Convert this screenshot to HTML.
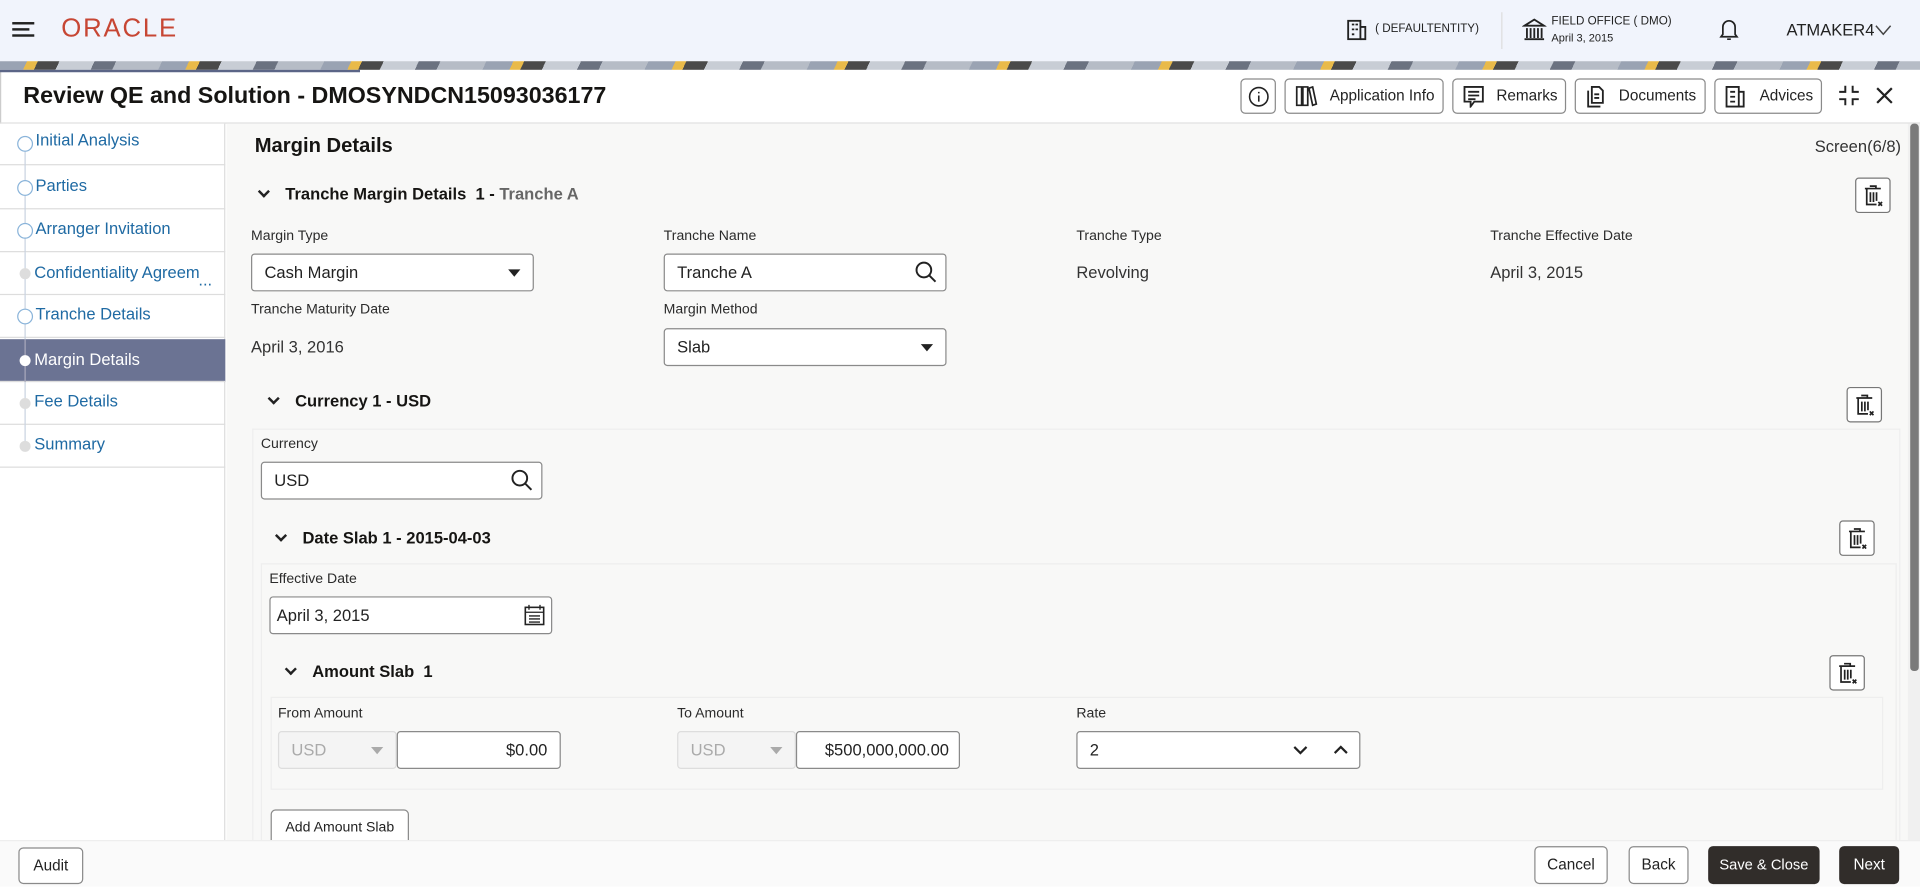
<!DOCTYPE html>
<html><head><meta charset="utf-8">
<style>
*{box-sizing:border-box;margin:0;padding:0}
html,body{width:1920px;height:886px;overflow:hidden;background:#fff}
#w{position:absolute;left:0;top:0;width:1568px;height:724px;transform:scale(1.22449);transform-origin:0 0;font-family:"Liberation Sans",sans-serif;color:#161513;overflow:hidden}
.a{position:absolute}
.t{position:absolute;white-space:nowrap}
.lbl{font-size:11.5px;color:#2b2b2b}
.val{font-size:13.5px;color:#333}
.inp{position:absolute;background:#fff;border:1px solid #8a8a8a;border-radius:3px;height:31px;font-size:13.5px;padding:0 10px;line-height:29px;color:#222}
.btn{position:absolute;border:1px solid #8a8a8a;border-radius:4px;background:#fff;height:29px;font-size:12.5px;line-height:27px;text-align:center;color:#222}
.side{position:absolute;left:0;width:184px;height:35px;border-bottom:1px solid #ddd;font-size:13.5px;color:#1f6aa3}
.side span{position:absolute;left:29px;top:8px;white-space:nowrap}
.chk{position:absolute;left:14px;top:11px;width:13px;height:13px;border:1px solid #8ab4da;border-radius:50%;background:#fff}
.dot{position:absolute;left:16px;top:13px;width:9px;height:9px;border-radius:50%;background:#ddd}
.vl{position:absolute;left:20px;width:1px;background:#c9d3e0}
.trash{position:absolute;width:29px;height:29px;border:1px solid #777;border-radius:3px;background:#fff}
.sec{position:absolute;font-size:13.5px;font-weight:bold;color:#161513;white-space:nowrap}
.chev{display:inline-block;width:7px;height:7px;border-right:2px solid #222;border-bottom:2px solid #222;transform:rotate(45deg);margin-right:14px;position:relative;top:-3px}
</style></head><body><div id="w">
<div class="a" style="left:0;top:0;width:1568px;height:50px;background:#f1f4fc"></div>
<div class="a" style="left:10px;top:18px;width:18px;height:2px;background:#222"></div>
<div class="a" style="left:10px;top:23px;width:14px;height:2px;background:#222"></div>
<div class="a" style="left:10px;top:28px;width:18px;height:2px;background:#222"></div>
<div class="t" style="left:50px;top:12px;font-size:21px;color:#c74634;letter-spacing:1.5px">ORACLE</div>
<svg class="a" style="left:1099px;top:15px" width="18" height="18" viewBox="0 0 18 18" fill="none" stroke="#222" stroke-width="1.5"><rect x="2" y="2" width="10" height="15"/><path d="M12 7h4v10h-4M5 5h2M5 9h2M5 13h2M8 5h2M8 9h2"/></svg>
<div class="t" style="left:1123px;top:18px;font-size:9.5px;color:#222">( DEFAULTENTITY)</div>
<div class="a" style="left:1226px;top:10px;width:1px;height:30px;background:#ddd"></div>
<svg class="a" style="left:1243px;top:14px" width="20" height="20" viewBox="0 0 20 20" fill="none" stroke="#222" stroke-width="1.5"><path d="M2 7L10 2 18 7zM4 9v8M7 9v8M10 9v8M13 9v8M16 9v8M2 18h16"/></svg>
<div class="t" style="left:1267px;top:12px;font-size:9.5px;color:#222">FIELD OFFICE ( DMO)</div>
<div class="t" style="left:1267px;top:26px;font-size:9px;color:#222">April 3, 2015</div>
<svg class="a" style="left:1404px;top:14px" width="16" height="20" viewBox="0 0 16 20" fill="none" stroke="#222" stroke-width="1.4"><path d="M3 14V8a5 5 0 0110 0v6l1.5 2h-13z M6.5 18h3"/></svg>
<div class="t" style="left:1459px;top:17px;font-size:13.5px;color:#222">ATMAKER4</div>
<svg class="a" style="left:1531px;top:20px" width="14" height="10" viewBox="0 0 14 10" fill="none" stroke="#444" stroke-width="1.2"><path d="M1 1l6 7 6-7"/></svg>
<div class="a" style="left:0;top:50px;width:1568px;height:8px;background:repeating-linear-gradient(115deg,#9aa3b3 0 20px,#e9ba4a 20px 28px,#4a4a4a 28px 44px,#c8cdd5 44px 70px,#6b7280 70px 86px,#b6bcc6 86px 120px)"></div>
<div class="a" style="left:0;top:57px;width:1568px;height:667px;background:#fff;border-left:1px solid #ccc"></div>
<div class="a" style="left:0;top:57px;width:294px;height:2px;background:#5b6587"></div>
<div class="t" style="left:19px;top:68px;font-size:19px;font-weight:bold;color:#161513">Review QE and Solution - DMOSYNDCN15093036177</div>
<div class="btn" style="left:1013px;top:64px;width:29px;"><svg width="18" height="18" viewBox="0 0 18 18" style="margin-top:5px" fill="none" stroke="#222" stroke-width="1.3"><circle cx="9" cy="9" r="7.5"/><path d="M9 8v5M9 5v1.3"/></svg></div>
<div class="btn" style="left:1049px;top:64px;width:130px;text-align:left;padding-left:36px">Application Info</div>
<svg class="a" style="left:1058px;top:70px" width="18" height="17" viewBox="0 0 18 17" fill="none" stroke="#222" stroke-width="1.4"><path d="M1 1h4v15H1zM6 1h4v15H6zM11 2l3-1 3 14-3 1z"/></svg>
<div class="btn" style="left:1186px;top:64px;width:93px;text-align:left;padding-left:35px">Remarks</div>
<svg class="a" style="left:1195px;top:70px" width="17" height="18" viewBox="0 0 17 18" fill="none" stroke="#222" stroke-width="1.5"><path d="M1 1h15v12H9l-3 4v-4H1zM4 5h9M4 8h9M4 11h6"/></svg>
<div class="btn" style="left:1286px;top:64px;width:107px;text-align:left;padding-left:35px">Documents</div>
<svg class="a" style="left:1296px;top:70px" width="16" height="18" viewBox="0 0 16 18" fill="none" stroke="#222" stroke-width="1.5"><path d="M4 1h6l3 3v10H4zM1 4v13h10M6 7h4M6 10h4"/></svg>
<div class="btn" style="left:1400px;top:64px;width:88px;text-align:left;padding-left:36px">Advices</div>
<svg class="a" style="left:1409px;top:70px" width="17" height="18" viewBox="0 0 17 18" fill="none" stroke="#222" stroke-width="1.5"><path d="M1 1h10v16H1zM11 5h4v12h-4M4 5h4M4 9h4M4 13h4"/></svg>
<svg class="a" style="left:1501px;top:69px" width="18" height="18" viewBox="0 0 18 18" fill="none" stroke="#222" stroke-width="1.6"><path d="M6 1v5H1M12 1v5h5M6 17v-5H1M12 17v-5h5"/></svg>
<svg class="a" style="left:1532px;top:71px" width="14" height="14" viewBox="0 0 14 14" stroke="#222" stroke-width="1.8"><path d="M1 1l12 12M13 1L1 13"/></svg>
<div class="a" style="left:0;top:100px;width:1568px;height:1px;background:#ddd"></div>
<div class="a" style="left:0;top:101px;width:184px;height:585px;background:#fff;border-right:1px solid #ddd"></div>
<div class="side" style="top:100px"><div class="vl" style="top:24px;height:12px"></div><div class="chk"></div><span style="top:7px">Initial Analysis</span></div>
<div class="side" style="top:136px"><div class="vl" style="top:0;height:35px"></div><div class="chk"></div><span>Parties</span></div>
<div class="side" style="top:171px"><div class="vl" style="top:0;height:35px"></div><div class="chk"></div><span>Arranger Invitation</span></div>
<div class="side" style="top:206px"><div class="vl" style="top:0;height:35px"></div><div class="dot"></div><span style="left:28px;top:9px">Confidentiality Agreem</span><span style="left:162px;top:15px;color:#1f6aa3">...</span></div>
<div class="side" style="top:241px"><div class="vl" style="top:0;height:36px"></div><div class="chk"></div><span>Tranche Details</span></div>
<div class="side" style="top:277px;background:#6b7393;color:#fff"><div class="vl" style="top:0;height:35px;background:#aab"></div><div class="dot" style="background:#fff"></div><span style="left:28px;top:9px">Margin Details</span></div>
<div class="side" style="top:312px"><div class="vl" style="top:0;height:35px"></div><div class="dot"></div><span style="left:28px">Fee Details</span></div>
<div class="side" style="top:347px"><div class="vl" style="top:0;height:18px"></div><div class="dot"></div><span style="left:28px">Summary</span></div>
<div class="a" style="left:188px;top:380px;width:3px;height:75px;border:1px solid #ccc;border-radius:2px"></div>
<div class="a" style="left:185px;top:101px;width:1373px;height:585px;background:#f8f8f7"></div>
<div class="a" style="left:1558px;top:101px;width:10px;height:585px;background:#f0f0f0"></div>
<div class="a" style="left:1560px;top:101px;width:7px;height:447px;background:#7a7a7a;border-radius:3px"></div>
<div class="t" style="left:208px;top:110px;font-size:16.5px;font-weight:bold">Margin Details</div>
<div class="t" style="left:1482px;top:112px;font-size:13.5px;color:#333">Screen(6/8)</div>
<div class="sec" style="left:212px;top:151px"><span class="chev"></span>Tranche Margin Details&nbsp;&nbsp;1 - <span style="color:#666">Tranche A</span></div>
<div class="trash" style="left:1515px;top:145px"></div>
<div class="t lbl" style="left:205px;top:187px">Margin Type</div>
<div class="inp" style="left:205px;top:207px;width:231px">Cash Margin<span style="position:absolute;right:10px;top:12px;border:5px solid transparent;border-top:6px solid #222;border-bottom:0"></span></div>
<div class="t lbl" style="left:542px;top:187px">Tranche Name</div>
<div class="inp" style="left:542px;top:207px;width:231px">Tranche A</div>
<div class="t lbl" style="left:879px;top:187px">Tranche Type</div>
<div class="t val" style="left:879px;top:215px">Revolving</div>
<div class="t lbl" style="left:1217px;top:187px">Tranche Effective Date</div>
<div class="t val" style="left:1217px;top:215px">April 3, 2015</div>
<div class="t lbl" style="left:205px;top:247px">Tranche Maturity Date</div>
<div class="t val" style="left:205px;top:276px">April 3, 2016</div>
<div class="t lbl" style="left:542px;top:247px">Margin Method</div>
<div class="inp" style="left:542px;top:268px;width:231px">Slab<span style="position:absolute;right:10px;top:12px;border:5px solid transparent;border-top:6px solid #222;border-bottom:0"></span></div>
<div class="sec" style="left:220px;top:320px"><span class="chev"></span>Currency 1 - USD</div>
<div class="trash" style="left:1508px;top:316px"></div>
<div class="a" style="left:206px;top:350px;width:1346px;height:336px;border:1px solid #eee;background:#f8f8f7;border-bottom:none"></div>
<div class="t lbl" style="left:213px;top:357px">Currency</div>
<div class="inp" style="left:213px;top:377px;width:230px">USD</div>
<div class="sec" style="left:226px;top:432px"><span class="chev"></span>Date Slab 1 - 2015-04-03</div>
<div class="trash" style="left:1502px;top:425px"></div>
<div class="a" style="left:213px;top:460px;width:1336px;height:226px;border:1px solid #eee;background:#f8f8f7;border-bottom:none"></div>
<div class="t lbl" style="left:220px;top:467px">Effective Date</div>
<div class="inp" style="left:220px;top:487px;width:231px;padding-left:5px">April 3, 2015</div>
<svg class="a" style="left:428px;top:493px" width="17" height="18" viewBox="0 0 17 18" fill="none" stroke="#222" stroke-width="1.3"><rect x="1" y="3" width="15" height="14"/><path d="M4 1v4M13 1v4M1 7h15M4 10h9M4 12.5h9M4 15h9" stroke-width="1.1"/></svg>
<div class="sec" style="left:234px;top:541px"><span class="chev"></span>Amount Slab&nbsp;&nbsp;1</div>
<div class="trash" style="left:1494px;top:535px"></div>
<div class="a" style="left:221px;top:569px;width:1317px;height:76px;border:1px solid #eee;background:#f8f8f7"></div>
<div class="t lbl" style="left:227px;top:577px">From Amount</div>
<div class="inp" style="left:227px;top:597px;width:97px;background:#f4f4f4;border-color:#ddd;color:#aaa">USD<span style="position:absolute;right:10px;top:12px;border:5px solid transparent;border-top:6px solid #aaa;border-bottom:0"></span></div>
<div class="inp" style="left:324px;top:597px;width:134px;text-align:right">$0.00</div>
<div class="t lbl" style="left:553px;top:577px">To Amount</div>
<div class="inp" style="left:553px;top:597px;width:97px;background:#f4f4f4;border-color:#ddd;color:#aaa">USD<span style="position:absolute;right:10px;top:12px;border:5px solid transparent;border-top:6px solid #aaa;border-bottom:0"></span></div>
<div class="inp" style="left:650px;top:597px;width:134px;text-align:right;padding-right:8px">$500,000,000.00</div>
<div class="t lbl" style="left:879px;top:577px">Rate</div>
<div class="inp" style="left:879px;top:597px;width:232px">2</div>
<svg class="a" style="left:1056px;top:607px" width="45" height="10" viewBox="0 0 45 10" fill="none" stroke="#222" stroke-width="1.8"><path d="M1 3l5 5 5-5M34 8l5-5 5 5"/></svg>
<div class="btn" style="left:221px;top:661px;width:113px;height:30px;line-height:29px;font-size:11.5px">Add Amount Slab</div>
<div class="a" style="left:0;top:686px;width:1568px;height:38px;background:#fafafa;border-top:1px solid #eee"></div>
<div class="btn" style="left:15px;top:692px;width:53px;height:30px;line-height:28px">Audit</div>
<div class="btn" style="left:1253px;top:691px;width:60px;height:31px;line-height:29px">Cancel</div>
<div class="btn" style="left:1330px;top:691px;width:49px;height:31px;line-height:29px">Back</div>
<div class="btn" style="left:1395px;top:691px;width:91px;height:31px;line-height:29px;background:#312d2a;color:#fff;border-color:#312d2a;font-size:12px">Save &amp; Close</div>
<div class="btn" style="left:1502px;top:691px;width:49px;height:31px;line-height:29px;background:#312d2a;color:#fff;border-color:#312d2a">Next</div>
<svg class="a" style="left:747px;top:213px" width="18" height="18" viewBox="0 0 18 18" fill="none" stroke="#222" stroke-width="1.6"><circle cx="7.5" cy="7.5" r="6"/><path d="M12 12l5 5"/></svg>
<svg class="a" style="left:417px;top:383px" width="18" height="18" viewBox="0 0 18 18" fill="none" stroke="#222" stroke-width="1.6"><circle cx="7.5" cy="7.5" r="6"/><path d="M12 12l5 5"/></svg>
<svg class="a" style="left:1521px;top:151px" width="18" height="18" viewBox="0 0 18 18" fill="none" stroke="#222" stroke-width="1.4"><path d="M6 1h5v2M2 3h13M3.5 3v13h8M6.5 6v8M9 6v8M11.5 6v7M13 14l3 3M16 14l-3 3"/></svg>
<svg class="a" style="left:1514px;top:322px" width="18" height="18" viewBox="0 0 18 18" fill="none" stroke="#222" stroke-width="1.4"><path d="M6 1h5v2M2 3h13M3.5 3v13h8M6.5 6v8M9 6v8M11.5 6v7M13 14l3 3M16 14l-3 3"/></svg>
<svg class="a" style="left:1508px;top:431px" width="18" height="18" viewBox="0 0 18 18" fill="none" stroke="#222" stroke-width="1.4"><path d="M6 1h5v2M2 3h13M3.5 3v13h8M6.5 6v8M9 6v8M11.5 6v7M13 14l3 3M16 14l-3 3"/></svg>
<svg class="a" style="left:1500px;top:541px" width="18" height="18" viewBox="0 0 18 18" fill="none" stroke="#222" stroke-width="1.4"><path d="M6 1h5v2M2 3h13M3.5 3v13h8M6.5 6v8M9 6v8M11.5 6v7M13 14l3 3M16 14l-3 3"/></svg>
</div></body></html>
